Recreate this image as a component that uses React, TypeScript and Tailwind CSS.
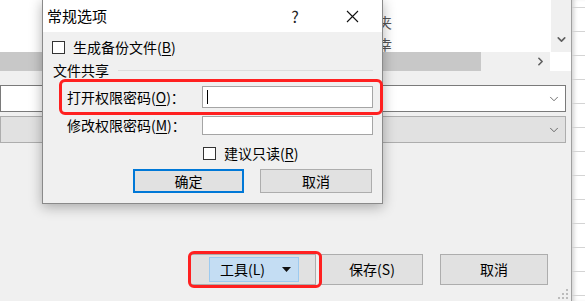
import { ChevronDown, ChevronRight } from "lucide-react";

function Checkbox() {
  return <div className="w-[13px] h-[13px] border border-[#333333] bg-white shrink-0" />;
}

function Key({ k }: { k: string }) {
  return (
    <span>
      (<span className="underline underline-offset-2">{k}</span>)
    </span>
  );
}

function OptionsDialog() {
  return (
    <div className="absolute left-[42px] top-[-1px] w-[341px] h-[205px] border border-[#8a8a8a] bg-[#f0f0f0] shadow-[0_3px_12px_rgba(0,0,0,0.3)] flex flex-col">
      <div className="h-[32px] bg-white flex items-center shrink-0">
        <span className="pl-[4px] text-[15px]">常规选项</span>
        <span className="ml-auto w-[54px] text-center text-[16px] text-[#222]">?</span>
        <span className="w-[60px] flex justify-center">
          <svg width="13" height="13" viewBox="0 0 13 13">
            <path d="M1 1 L12 12 M12 1 L1 12" stroke="#111" strokeWidth="1.1" />
          </svg>
        </span>
      </div>

      <div className="flex items-center gap-[8px] pl-[9px] mt-[9px] h-[13px]">
        <Checkbox />
        <span className="leading-[13px]">
          生成备份文件<Key k="B" />
        </span>
      </div>

      <div className="flex items-center pl-[10px] mt-[8px] h-[16px]">
        <span>文件共享</span>
        <div className="flex-1 h-px bg-[#dcdcdc] ml-[9px] mr-[9px]" />
      </div>

      <div className="flex items-center mt-[8px] h-[22px]">
        <span className="w-[159px] pl-[24px]">
          打开权限密码<Key k="O" />：
        </span>
        <div className="w-[171px] h-[22px] border border-[#a5a5a5] bg-white flex items-center pl-[4px]">
          <div className="w-px h-[14px] bg-black" />
        </div>
      </div>

      <div className="flex items-center mt-[8px] h-[19px]">
        <span className="w-[159px] pl-[24px]">
          修改权限密码<Key k="M" />：
        </span>
        <div className="w-[171px] h-[19px] border border-[#a5a5a5] bg-white" />
      </div>

      <div className="flex items-center gap-[8px] pl-[160px] mt-[12px] h-[13px]">
        <Checkbox />
        <span className="leading-[13px]">
          建议只读<Key k="R" />
        </span>
      </div>

      <div className="flex mt-[9px] pl-[90px]">
        <div className="w-[111px] h-[24px] border-2 border-[#0078d7] bg-[#e1e1e1] flex items-center justify-center">
          确定
        </div>
        <div className="ml-[16px] w-[112px] h-[24px] border border-[#adadad] bg-[#e1e1e1] flex items-center justify-center">
          取消
        </div>
      </div>
    </div>
  );
}

function ExcelStrip() {
  const rows = Array.from({ length: 13 });
  return (
    <div className="w-[13px] bg-white flex flex-col shadow-[inset_4px_0_4px_-2px_rgba(0,0,0,0.18)]">
      <div className="h-[8px] border-b border-[#d4d4d4] shrink-0" />
      {rows.map((_, i) => (
        <div key={i} className="h-[24px] border-b border-[#d4d4d4] shrink-0" />
      ))}
    </div>
  );
}

export default function App() {
  return (
    <div className="relative w-[585px] h-[301px] overflow-hidden bg-[#f0f0f0] flex text-[14px] text-black font-['Noto_Sans_CJK_SC',sans-serif]">
      <div className="relative w-[572px] flex flex-col border-r border-[#a0a0a0]">
        <div className="flex h-[52px]">
          <div className="flex-1 bg-white flex flex-col pt-[11px] text-[#555]">
            <div className="h-[25px] pl-[378px] leading-[22px]">夹</div>
            <div className="h-[25px] pl-[378px] leading-[22px]">幸</div>
          </div>
          <div className="w-[20px] bg-[#f0f0f0] flex items-end justify-center pb-[6px]">
            <ChevronDown size={13} strokeWidth={3} color="#606060" />
          </div>
        </div>

        <div className="flex h-[19px]">
          <div className="w-[481px] bg-[#c8c8c8]" />
          <div className="flex-1 bg-[#f0f0f0] flex items-center justify-end pr-[3px]">
            <ChevronRight size={13} strokeWidth={3} color="#606060" />
          </div>
          <div className="w-[21px] bg-white" />
        </div>

        <div className="flex-1 flex flex-col pt-[14px]">
          <div className="w-[566px] h-[27px] bg-white border border-[#7a7a7a] flex items-center justify-end pr-[4px]">
            <ChevronDown size={14} strokeWidth={1.3} color="#444" />
          </div>
          <div className="mt-[4px] w-[566px] h-[27px] bg-[#e1e1e1] border border-[#adadad] flex items-center justify-end pr-[4px]">
            <ChevronDown size={14} strokeWidth={1.3} color="#444" />
          </div>

          <div className="mt-[111px] flex pl-[190px]">
            <div className="w-[126px] h-[31px] border border-[#adadad] bg-[#e1e1e1] flex items-center pl-[18px]">
              <div className="w-[90px] h-[25px] bg-[#c4ddf3] border border-[#9ccaf0] flex items-center pl-[10px]">
                <span>工具(L)</span>
                <svg className="ml-[17px]" width="9" height="5" viewBox="0 0 9 5">
                  <path d="M0 0 L9 0 L4.5 5 Z" fill="#111" />
                </svg>
              </div>
            </div>
            <div className="ml-[5px] w-[102px] h-[31px] border border-[#adadad] bg-[#e1e1e1] flex items-center justify-center">
              保存(S)
            </div>
            <div className="ml-[17px] w-[108px] h-[31px] border border-[#adadad] bg-[#e1e1e1] flex items-center justify-center">
              取消
            </div>
          </div>
        </div>

        <svg className="absolute right-[2px] bottom-[1px]" width="12" height="12" viewBox="0 0 12 12">
          <rect x="9" y="1" width="2" height="2" fill="#bcbcbc" />
          <rect x="5" y="5" width="2" height="2" fill="#bcbcbc" />
          <rect x="9" y="5" width="2" height="2" fill="#bcbcbc" />
          <rect x="1" y="9" width="2" height="2" fill="#bcbcbc" />
          <rect x="5" y="9" width="2" height="2" fill="#bcbcbc" />
          <rect x="9" y="9" width="2" height="2" fill="#bcbcbc" />
        </svg>
      </div>

      <ExcelStrip />

      <OptionsDialog />

      <div className="absolute left-[59px] top-[79px] w-[324px] h-[36px] border-[3px] border-[#ff2020] rounded-[6px]" />
      <div className="absolute left-[188px] top-[251px] w-[134px] h-[37px] border-[3px] border-[#ff2020] rounded-[6px]" />
    </div>
  );
}
